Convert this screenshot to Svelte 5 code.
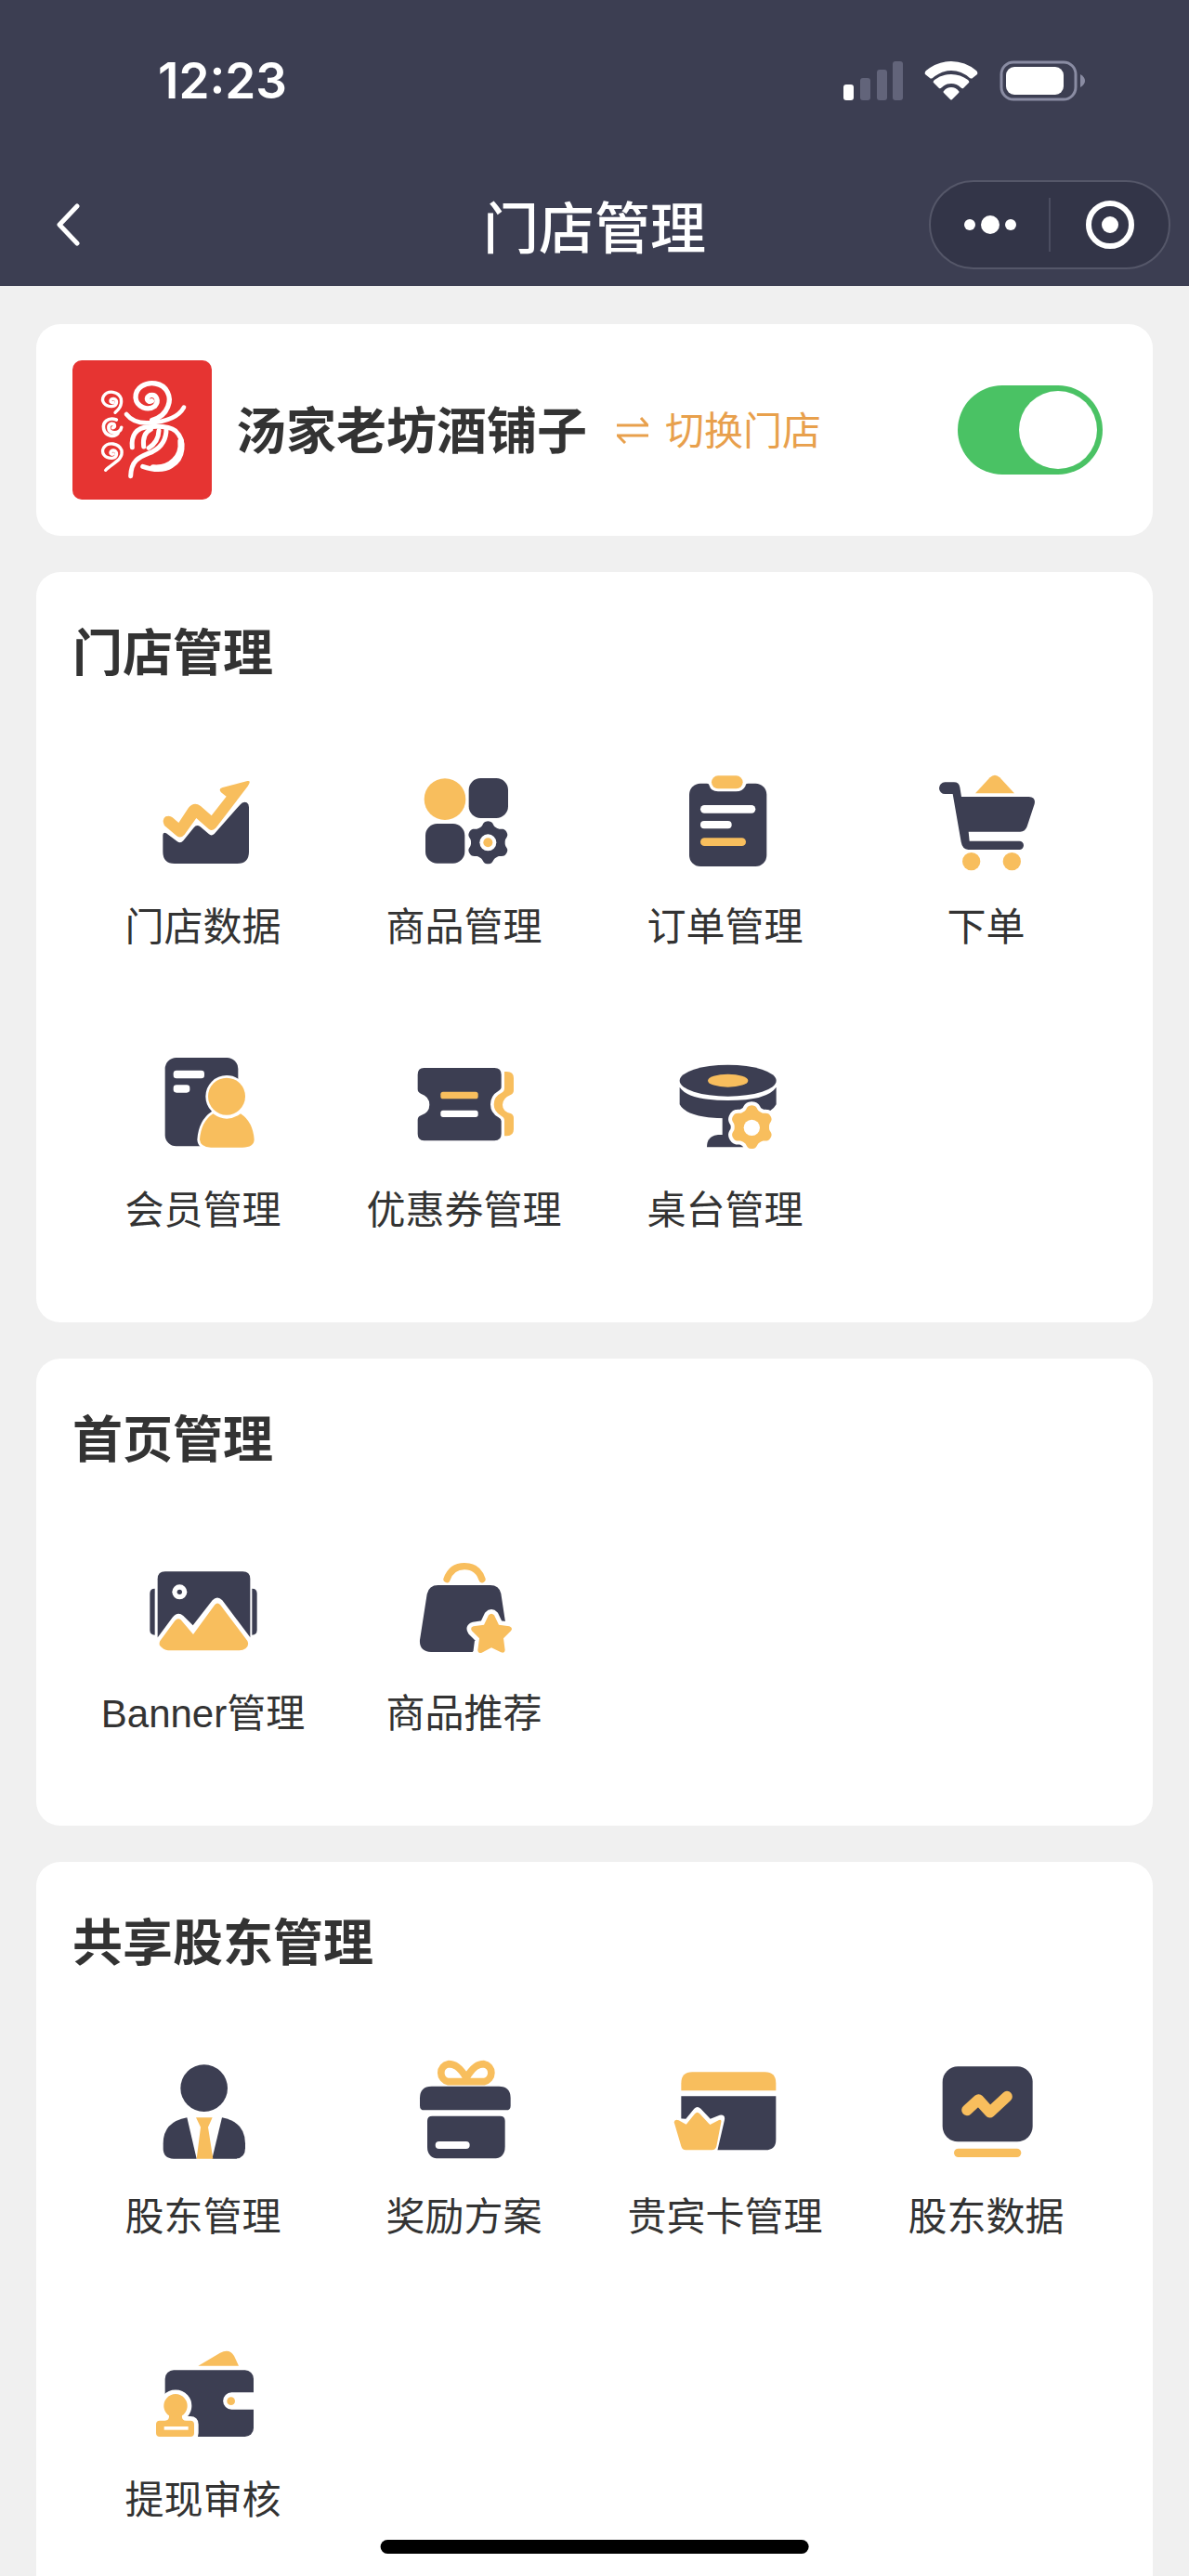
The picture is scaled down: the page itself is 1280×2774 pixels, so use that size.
<script lang="ts">
  interface Entry {
    icon: string;
    label: string;
    viewBox: string;
  }

  interface Section {
    id: string;
    title: string;
    entries: Entry[];
  }

  const sections: Section[] = [
    {
      id: "store",
      title: "门店管理",
      entries: [
        { icon: "chart", label: "门店数据", viewBox: "159 60 390 390" },
        { icon: "goods", label: "商品管理", viewBox: "1002 60 390 390" },
        { icon: "orders", label: "订单管理", viewBox: "165 60 390 390" },
        { icon: "cart", label: "下单", viewBox: "1008 60 390 390" },
        { icon: "member", label: "会员管理", viewBox: "159 45 390 390" },
        { icon: "coupon", label: "优惠券管理", viewBox: "1002 45 390 390" },
        { icon: "table", label: "桌台管理", viewBox: "45 15 390 390" },
      ],
    },
    {
      id: "home",
      title: "首页管理",
      entries: [
        { icon: "banner", label: "Banner管理", viewBox: "159 51 390 390" },
        { icon: "bag", label: "商品推荐", viewBox: "1002 51 390 390" },
      ],
    },
    {
      id: "partner",
      title: "共享股东管理",
      entries: [
        { icon: "person", label: "股东管理", viewBox: "159 57 390 390" },
        { icon: "gift", label: "奖励方案", viewBox: "1002 57 390 390" },
        { icon: "vip", label: "贵宾卡管理", viewBox: "165 57 390 390" },
        { icon: "monitor", label: "股东数据", viewBox: "1008 57 390 390" },
        { icon: "wallet", label: "提现审核", viewBox: "279 42 390 390" },
      ],
    },
  ];

  let open = $state(true);

  // six-toothed gear outline, first tooth pointing up
  function gear(cx: number, cy: number, r: number, depth: number) {
    const points: string[] = [];
    for (let i = 0; i < 120; i++) {
      const a = (i / 120) * Math.PI * 2;
      const wave = Math.tanh(1.4 * Math.cos(6 * a)) / Math.tanh(1.4);
      const d = r - depth + depth * wave;
      points.push(`${(cx + d * Math.sin(a)).toFixed(1)},${(cy - d * Math.cos(a)).toFixed(1)}`);
    }
    return points.join(" ");
  }
</script>

{#snippet art(name: string)}
  {#if name === "chart"}
    <path class="navy" d="M223 298Q223 287 234 292L270 319Q280 326 289 316L323 274Q332 262 344 271L372 295Q380 302 389 294L472 200Q482 188 494 193Q501 197 501 208V352Q501 390 463 390H261Q223 390 223 352Z" />
    <path class="gold" d="M232 238Q245 233 254 241L274 258L306 209Q324 188 345 204L380 235L428 173L411 160Q401 148 416 144L496 123Q506 121 502 131L497 140L395 274Q383 287 371 278L331 243L293 296Q281 310 268 301L228 267Q218 247 232 238Z" />
  {:else if name === "goods"}
    <circle class="gold" cx="1134" cy="182" r="67" />
    <rect class="navy" x="1211" y="114" width="127" height="129" rx="38" />
    <rect class="navy" x="1071" y="261" width="127" height="128" rx="38" />
    <polygon class="navy" points={gear(1273, 322, 69, 7)} />
    <circle class="white" cx="1273" cy="322" r="27" />
    <circle class="gold" cx="1273" cy="322" r="15" />
  {:else if name === "orders"}
    <rect class="navy" x="243" y="131" width="250" height="268" rx="36" />
    <path class="white" d="M299 129H433Q424 133 424 140Q415 157 394 157H336Q312 155 308 138Q307 132 299 129Z" />
    <rect class="gold" x="315" y="106" width="101" height="42" rx="21" />
    <rect class="white" x="279" y="201" width="178" height="26" rx="13" />
    <rect class="white" x="279" y="252" width="101" height="25" rx="12" />
    <rect class="gold" x="279" y="307" width="147" height="26" rx="13" />
  {:else if name === "cart"}
    <path class="gold" d="M1167 163L1214 112Q1230 97 1246 112L1293 163Z" />
    <path class="navy" d="M1069 127H1098Q1114 127 1117 143L1122 174H1340Q1363 176 1358 197L1334 270Q1328 287 1312 287H1145L1148 317H1309A14 14 0 0 1 1309 345H1144Q1125 343 1121 320L1094 165H1069A19 19 0 0 1 1069 127Z" />
    <circle class="gold" cx="1154" cy="383" r="29" />
    <circle class="gold" cx="1285" cy="383" r="29" />
  {:else if name === "member"}
    <rect class="navy" x="230" y="87" width="236" height="286" rx="36" />
    <rect class="white" x="257" y="128" width="100" height="26" rx="10" />
    <rect class="white" x="257" y="175" width="53" height="25" rx="10" />
    <path class="gold edge" d="M385 268Q429 300 474 268Q514 294 518 352Q517 377 480 377H378Q344 376 342 352Q346 294 385 268Z" />
    <circle class="gold edge" cx="429" cy="212" r="60" />
  {:else if name === "coupon"}
    <path class="gold" d="M1326 132H1334Q1356 132 1356 153V192Q1356 203 1346 207Q1320 218 1320 239Q1320 260 1346 267Q1356 271 1356 282V318Q1356 340 1334 340H1326V290Q1326 280 1316 275Q1292 262 1292 238Q1292 212 1316 201Q1326 196 1326 186Z" />
    <path class="navy" d="M1066 120H1294Q1316 120 1316 142V181Q1316 190 1307 194Q1281 209 1281 238Q1281 266 1307 280Q1316 284 1316 292V333Q1316 355 1294 355H1066Q1046 355 1046 333V288Q1046 278 1056 274Q1084 264 1084 239Q1084 212 1056 203Q1046 199 1046 189V142Q1046 120 1066 120Z" />
    <rect class="gold" x="1120" y="197" width="121" height="23" rx="8" />
    <rect class="white" x="1120" y="257" width="121" height="22" rx="8" />
  {:else if name === "table"}
    <path class="navy" d="M92 152Q120 195 248 195Q376 195 404 152V208Q380 253 248 253Q116 253 92 208Z" />
    <ellipse class="navy edge-thin" cx="248" cy="131" rx="156" ry="51" />
    <path class="navy" d="M230 250H300V346H180Q180 309 216 306H230Z" />
    <ellipse class="gold" cx="248" cy="131" rx="65" ry="21" />
    <polygon class="gold edge-wide" points={gear(325, 281, 70, 7)} />
    <circle class="white" cx="325" cy="283" r="26" />
  {:else if name === "banner"}
    <path class="navy" d="M197 182V332Q181 332 181 316V198Q181 182 197 182Z" />
    <path class="navy" d="M511 182Q527 182 527 198V316Q527 332 511 332Z" />
    <path class="navy" d="M206 151Q206 127 230 127H481Q505 127 505 151V340H206Z" />
    <path class="white" d="M198 351L254 275Q271 255 289 270L320 301L383 220Q399 203 415 220L512 349Z" />
    <path class="gold" d="M214 351L262 286Q271 275 281 283L321 330L391 234Q399 225 408 234L496 351Q503 366 490 376Q482 382 470 382H240Q225 380 213 366Q210 359 214 351Z" />
    <circle class="white" cx="277" cy="193" r="24" />
    <circle class="navy" cx="277" cy="193" r="8" />
  {:else if name === "bag"}
    <path class="line gold-line" stroke-width="22" d="M1140 152Q1155 110 1197 110Q1240 110 1254 152" />
    <path class="navy" d="M1112 171H1280Q1309 171 1315 198L1329 290L1280 320L1223 387H1089Q1050 384 1053 348L1076 200Q1082 171 1112 171Z" />
    <path class="gold star" d="M1275 268Q1284 258 1293 268L1308 299L1342 304Q1355 309 1347 319L1323 343L1328 381Q1327 393 1315 388L1284 373L1253 389Q1241 393 1240 381L1245 343L1221 319Q1214 308 1226 304L1260 299Z" />
  {:else if name === "person"}
    <circle class="navy" cx="356" cy="176" r="76" />
    <path class="navy" d="M301 271Q224 285 224 355V370Q224 404 258 404H332Z" />
    <path class="navy" d="M414 271Q489 285 489 355V370Q489 404 455 404H382Z" />
    <path class="gold" d="M330 271H383L369 302L385 404H332L345 302Z" />
  {:else if name === "gift"}
    <path class="line gold-line" stroke-width="23" d="M1203 142C1180 106 1165 98 1145 98A29 29 0 0 0 1145 155H1260A29 29 0 0 0 1260 98C1241 98 1226 106 1203 142" />
    <path class="navy" d="M1091 170H1308Q1346 170 1346 208V233Q1346 247 1332 247H1067Q1053 247 1053 233V208Q1053 170 1091 170Z" />
    <path class="navy" d="M1093 266H1312Q1328 266 1328 282V365Q1328 403 1290 403H1115Q1077 403 1077 365V282Q1077 266 1093 266Z" />
    <rect class="white" x="1103" y="348" width="111" height="24" rx="12" />
  {:else if name === "vip"}
    <path class="gold" d="M217 184V160Q217 124 253 124H487Q523 124 523 160V184Z" />
    <path class="navy" d="M217 202H523V342Q523 376 489 376H217Z" />
    <path class="white" d="M190 272L232 275L259 242Q269 232 280 242L311 275L341 263Q360 260 357 278L333 382H217Z" />
    <path class="gold" d="M194 286Q196 274 209 280L233 293L261 259Q269 250 277 259L310 294L339 279Q348 275 346 286L331 364Q328 376 316 376H232Q220 376 217 364Z" />
  {:else if name === "monitor"}
    <rect class="navy" x="1061" y="106" width="291" height="243" rx="50" />
    <polyline class="line gold-line" stroke-width="35" points="1140,247 1177,213 1214,254 1269,203" />
    <rect class="gold" x="1098" y="371" width="217" height="28" rx="14" />
  {:else if name === "wallet"}
    <path class="gold" d="M457 143L528 101Q558 86 573 111L588 143Z" />
    <rect class="navy" x="350" y="157" width="286" height="215" rx="28" />
    <path class="white" d="M638 229H565A27 27 0 0 0 565 284H638Z" />
    <circle class="gold" cx="563" cy="257" r="13" />
    <path class="gold stamp" d="M363 304A38 38 0 1 1 405 304Q403 320 418 320H432Q444 320 444 332V360Q444 372 432 372H333Q321 372 321 360V332Q321 320 333 320H350Q364 320 363 304Z" />
    <rect class="white" x="347" y="339" width="78" height="11" />
  {/if}
{/snippet}

<div class="page">
  <header>
    <div class="status-bar">
      <time>12:23</time>
      <div class="status-icons">
        <svg width="64" height="42" viewBox="0 0 64 42" aria-hidden="true">
          <rect class="white" x="0" y="25" width="11" height="17" rx="3" />
          <rect class="faded" x="18" y="18" width="11" height="24" rx="3" />
          <rect class="faded" x="36" y="9" width="11" height="33" rx="3" />
          <rect class="faded" x="53" y="0" width="11" height="42" rx="3" />
        </svg>
        <svg width="58" height="42" viewBox="0 0 58 42" aria-hidden="true">
          <path class="white" d="M1 14Q0 12 2 10Q14 0 29 0T56 10Q58 12 57 14L52 18Q51 19 49 18Q40 10 29 10T9 18Q7 19 6 18Z" />
          <path class="white" d="M10 23Q9 22 11 20Q19 14 29 14T47 20Q49 22 48 23L42 29Q41 30 39 28Q35 24 29 24T19 28Q17 30 16 29Z" />
          <path class="white" d="M21 34Q20 33 21 32Q24 28 29 28T37 32Q38 33 37 34L30 41Q29 42 28 41Z" />
        </svg>
        <svg width="92" height="44" viewBox="0 0 92 44" aria-hidden="true">
          <rect class="shell" x="2" y="2" width="80" height="40" rx="13" />
          <rect class="white" x="7" y="7" width="62" height="30" rx="9" />
          <path class="nub" d="M87 15Q92 18 92 22T87 29Z" />
        </svg>
      </div>
    </div>
    <div class="nav-bar">
      <button class="back" aria-label="返回">
        <svg width="26" height="46" viewBox="0 0 26 46">
          <path class="line white-line" stroke-width="5" d="M23 3L4 23L23 43" />
        </svg>
      </button>
      <h1>门店管理</h1>
      <div class="capsule">
        <button aria-label="更多">
          <svg width="58" height="58" viewBox="0 0 58 58">
            <circle class="white" cx="7" cy="29" r="6" />
            <circle class="white" cx="29" cy="29" r="10" />
            <circle class="white" cx="51" cy="29" r="6" />
          </svg>
        </button>
        <button aria-label="关闭">
          <svg width="58" height="58" viewBox="0 0 58 58">
            <circle class="line white-line" stroke-width="6" cx="29" cy="29" r="23" />
            <circle class="white" cx="29" cy="29" r="9" />
          </svg>
        </button>
      </div>
    </div>
  </header>

  <main>
    <section class="card shop">
      <svg class="logo" viewBox="23 24 450 450" role="img" aria-label="汤家老坊">
        <rect x="23" y="24" width="450" height="450" rx="30" fill="#e63432" />
        <g class="line white-line">
          <path stroke-width="10" d="M155 160C143 164 142 147 156 148C171 151 168 172 151 173C128 174 114 156 124 139C138 119 172 124 180 148C184 170 173 182 161 193" />
          <path stroke-width="11" d="M153 242C162 240 161 228 149 229C136 233 136 253 153 257C170 260 180 250 181 241" />
          <path stroke-width="11" d="M165 216C137 206 119 225 124 246C129 268 157 275 170 260" />
          <path stroke-width="10" d="M155 327C143 331 142 314 156 315C171 318 168 339 151 340C128 341 114 323 124 306C138 286 172 291 182 315C188 346 152 356 130 379" />
          <path stroke-width="16" d="M279 155C264 163 258 143 273 137C296 132 303 157 289 172C266 189 230 175 227 145C226 111 260 94 291 99C327 105 345 141 331 174C321 200 303 211 280 218" />
          <path stroke-width="14" d="M197 198C213 219 238 228 271 226C325 223 366 207 383 176" />
          <path stroke-width="15" d="M216 305C212 268 228 240 269 239C308 236 338 238 356 252C389 283 383 341 343 365C318 381 281 378 250 367" />
          <path stroke-width="20" d="M373 285C379 335 340 376 284 371" />
          <path stroke-width="15" d="M276 247C256 257 250 279 253 303M269 307C290 295 301 278 302 251M326 243C327 280 313 303 282 319C242 336 213 342 211 398" />
        </g>
      </svg>
      <h2>汤家老坊酒铺子</h2>
      <a class="switch-shop" href="#switch">
        <svg width="34" height="29" viewBox="0 0 34 29" aria-hidden="true">
          <path d="M0 9H33L26 1M34 20H1L9 28" />
        </svg>
        <span>切换门店</span>
      </a>
      <input class="toggle" type="checkbox" bind:checked={open} aria-label="营业状态" />
    </section>

    {#each sections as section (section.id)}
      <section class="card">
        <h2>{section.title}</h2>
        <nav class="entries" aria-label={section.title}>
          {#each section.entries as entry (entry.icon)}
            <a class="entry" href="#{entry.icon}">
              <svg viewBox={entry.viewBox} aria-hidden="true">
                {@render art(entry.icon)}
              </svg>
              <span>{entry.label}</span>
            </a>
          {/each}
        </nav>
      </section>
    {/each}
  </main>

  <div class="home-indicator"></div>
</div>

<style>
  :global(body) {
    background: #f0f0f0;
  }

  .page {
    --navy: #3c3e52;
    --gold: #f8be5d;
    display: flex;
    flex-direction: column;
    height: 100vh;
    overflow: hidden;
    background: #f0f0f0;
    color: #333;
    font-family: "Noto Sans CJK SC", sans-serif;
  }

  h1,
  h2 {
    margin: 0;
  }

  button {
    display: flex;
    align-items: center;
    padding: 0;
    border: none;
    background: none;
  }

  a {
    color: inherit;
    text-decoration: none;
  }

  header {
    flex: none;
    background: var(--navy);
    color: #fff;
  }

  .status-bar {
    display: flex;
    align-items: center;
    justify-content: space-between;
    height: 174px;
    padding: 0 112px 0 170px;
  }

  time {
    font-family: Inter, sans-serif;
    font-size: 53px;
    font-weight: 600;
  }

  .status-icons {
    display: flex;
    align-items: center;
    gap: 23px;
  }

  .nav-bar {
    display: grid;
    grid-template-columns: 1fr auto 1fr;
    align-items: center;
    height: 136px;
    margin-bottom: -2px;
    padding: 0 20px 0 60px;
  }

  .nav-bar h1 {
    grid-column: 2;
    margin-right: 40px;
    font-size: 60px;
    font-weight: 500;
    line-height: 80px;
  }

  .capsule {
    display: flex;
    justify-self: end;
    align-items: center;
    box-sizing: border-box;
    width: 260px;
    height: 96px;
    border: 2px solid #555769;
    border-radius: 48px;
    background: #333548;
  }

  .capsule button {
    flex: 1;
    justify-content: center;
    height: 58px;
  }

  .capsule button + button {
    border-left: 2px solid #4b4d60;
  }

  main {
    display: flex;
    flex: 1;
    flex-direction: column;
    gap: 39px;
    min-height: 0;
    padding: 41px 39px 0;
    overflow-y: auto;
    background: #f0f0f0;
    scrollbar-width: none;
  }

  .card {
    flex: none;
    padding: 46px 39px 90px;
    border-radius: 26px;
    background: #fff;
  }

  .card h2 {
    font-size: 54px;
    font-weight: 700;
    line-height: 76px;
  }

  .shop {
    display: flex;
    align-items: center;
    padding: 39px 54px 39px 39px;
  }

  .shop h2,
  .shop span {
    padding-bottom: 4px;
  }

  .logo {
    width: 150px;
    height: 150px;
    margin-right: 26px;
  }

  .switch-shop {
    display: flex;
    align-items: center;
    gap: 18px;
    margin-left: 32px;
    color: #e8a04c;
    font-size: 42px;
    line-height: 60px;
  }

  .switch-shop path {
    fill: none;
    stroke: currentColor;
    stroke-width: 3;
  }

  .toggle {
    width: 156px;
    height: 96px;
    margin: 0 0 0 auto;
    padding: 6px;
    box-sizing: border-box;
    border-radius: 48px;
    background: #ddd;
    appearance: none;
  }

  .toggle::before {
    display: block;
    width: 84px;
    height: 84px;
    border-radius: 50%;
    background: #fff;
    content: "";
  }

  .toggle:checked {
    background: #4ac264;
  }

  .toggle:checked::before {
    margin-left: auto;
  }

  .entries {
    display: grid;
    grid-template-columns: repeat(4, 1fr);
    row-gap: 96px;
    margin-top: 82px;
  }

  .entry {
    display: flex;
    flex-direction: column;
    align-items: center;
    gap: 19px;
    font-family: "Liberation Sans", "Noto Sans CJK SC", sans-serif;
    font-size: 42px;
    line-height: 60px;
    white-space: nowrap;
  }

  .entry svg {
    width: 130px;
    height: 130px;
  }

  .navy {
    fill: var(--navy);
  }

  .gold {
    fill: var(--gold);
  }

  .white {
    fill: #fff;
  }

  .faded {
    fill: #62647a;
  }

  .shell {
    fill: none;
    stroke: #8a8ca3;
    stroke-width: 3;
  }

  .nub {
    fill: #8a8ca3;
  }

  .line {
    fill: none;
    stroke-linecap: round;
    stroke-linejoin: round;
  }

  .gold-line {
    stroke: var(--gold);
  }

  .white-line {
    stroke: #fff;
  }

  .edge,
  .edge-thin,
  .edge-wide,
  .star,
  .stamp {
    stroke: #fff;
    stroke-width: 16;
    stroke-linejoin: round;
    paint-order: stroke;
  }

  .edge-thin {
    stroke-width: 12;
  }

  .edge-wide {
    stroke-width: 24;
  }

  .star,
  .stamp {
    stroke-width: 28;
  }

  .home-indicator {
    position: fixed;
    bottom: 24px;
    left: 50%;
    width: 36%;
    height: 15px;
    border-radius: 8px;
    background: #000;
    transform: translateX(-50%);
  }
</style>
